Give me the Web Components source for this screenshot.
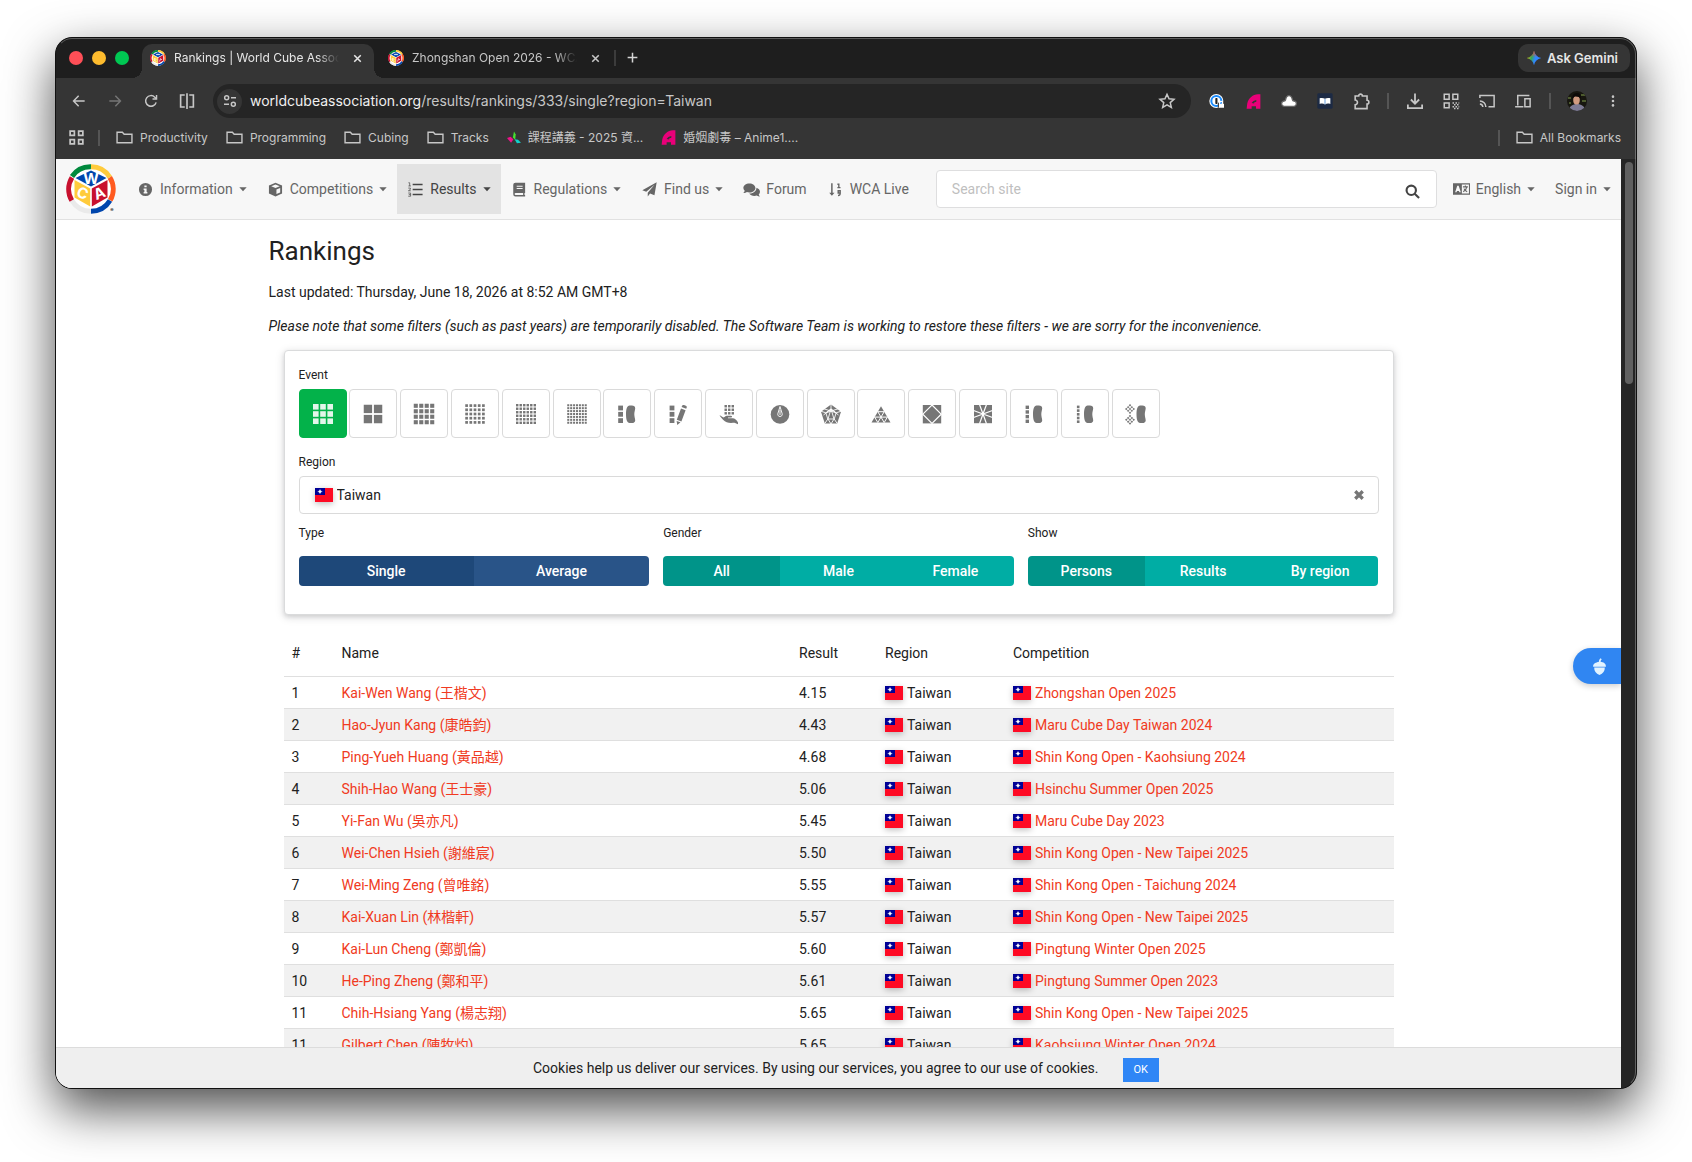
<!DOCTYPE html>
<html lang="en">
<head>
<meta charset="utf-8">
<title>Rankings | World Cube Association</title>
<style>
  * { box-sizing: border-box; }
  body {
    margin: 0;
    min-height: 100vh;
    background: #fff;
    font-family: Roboto, "Noto Sans CJK TC", sans-serif;
    font-size: 14px;
    line-height: 20px;
    color: #212121;
  }
</style>
</head>
<body>
  <browser-window>
    <tab-strip slot="chrome"></tab-strip>
    <tool-bar slot="chrome"></tool-bar>
    <bookmark-bar slot="chrome"></bookmark-bar>

    <site-nav></site-nav>
    <page-content>
      <h1 slot="title">Rankings</h1>
      <span slot="updated">Last updated: Thursday, June 18, 2026 at 8:52 AM GMT+8</span>
      <span slot="note">Please note that some filters (such as past years) are temporarily disabled. The Software Team is working to restore these filters - we are sorry for the inconvenience.</span>
      <rankings-filter></rankings-filter>
      <rankings-table></rankings-table>
    </page-content>
    <feedback-tab slot="overlay"></feedback-tab>
    <cookie-banner slot="overlay">Cookies help us deliver our services. By using our services, you agree to our use of cookies.</cookie-banner>
  </browser-window>

<script>
  // ---------- icons ----------

  // n x n squares centred in a 24 box
  function grid(n, size, gap, x = 12 - size / 2, y = 12 - size / 2) {
    const s = (size - gap * (n - 1)) / n;
    let out = '';
    for (let r = 0; r < n; r++) {
      for (let c = 0; c < n; c++) {
        out += `<rect x="${x + c * (s + gap)}" y="${y + r * (s + gap)}" width="${s}" height="${s}"/>`;
      }
    }
    return out;
  }

  function column(n, width, x) {
    const step = (17.4 - width) / (n - 1);
    let out = '';
    for (let i = 0; i < n; i++) {
      out += `<rect x="${x}" y="${3.6 + i * step}" width="${width}" height="${width}"/>`;
    }
    return out;
  }

  const bean = '<path d="M14.6 3.6h2.2c2.2 0 3.4 1.2 3.4 2.6 0 1.6-.9 3.6-.9 6.1s.9 4.5.9 6.1c0 1.4-1.2 2.6-3.4 2.6h-2.2c-2.6 0-3.6-3.7-3.6-8.7s1-8.7 3.6-8.7z"/>';
  const diamond = (y) => `<g transform="rotate(45 7 ${y})">${grid(3, 7, 0.9, 3.5, y - 3.5)}</g>`;

  const eventIcons = {
    'e-333': grid(3, 20, 1.6),
    'e-222': grid(2, 18.5, 1.8),
    'e-444': grid(4, 20.5, 1.4),
    'e-555': grid(5, 19.5, 1.5),
    'e-666': grid(6, 20, 1.1),
    'e-777': grid(7, 19.5, 0.9),
    'e-333bf': column(3, 4.8, 3.2) + bean,
    'e-333fm': column(3, 4.8, 3.6) + '<path d="M15 6.500l4.600 1.700-4.200 11.300-4.600-1.700zM10.600 18.900l3.900 1.400-3.200 2.600zM15.600 5.100l.6-1.500c.6-1.400 5.200.2 4.600 1.700l-.6 1.500z"/>',
    'e-333oh': grid(3, 9.5, 1.1, 7.5, 3) + '<path d="M2.500 13.500c1.500-.4 2.700 1.600 4 2 1.600-.5 1.700-1.500 3.300-1.700h4c1.600 0 1.700 1.600.2 1.700h-3v.7h4.800c1.900 0 4 1.600 5.200 4.300v1.700l-3.500-1.400c-1.600 0-5.200.5-7.800-.5-2.500-1-4.800-3.700-7.200-6.800z"/>',
    'e-clock': '<circle cx="12" cy="12.4" r="9.3"/><path d="M12 4.5l2.2 7.3c.3 1.6-.8 2.7-2.2 2.7s-2.500-1.100-2.200-2.700zM12 8v5" fill="none" stroke="#fff" stroke-width=".9"/>',
    'e-minx': '<path d="M12 2.5l10 7.3-3.8 11.7H5.8L2 9.8z"/><path d="M12 7l5.2 3.8-2 6.2H8.8l-2-6.2zM12 7V2M17.2 10.800l5-1.600M15.2 17l3 4.500M8.800 17l-3 4.500M6.800 10.800l-5-1.600M5 6.800l12.300 4.100M19 6.800L6.700 10.900M12 7l7.500 6M12 7l-7.500 6M9 17l3-10M15 17L12 7M12 22l3-5M12 22l-3-5" fill="none" stroke="#fff" stroke-width=".9"/>',
    'e-pyram': '<path d="M12 4.3L21.5 20.5h-19z"/><path d="M8.8 9.7h6.4M5.6 15.1h12.8M8.8 9.7l6.4 10.8M15.2 9.7L8.8 20.5M5.6 15.1l3.2 5.4M18.4 15.1l-3.2 5.4" fill="none" stroke="#fff" stroke-width="1"/>',
    'e-skewb': '<path d="M2.8 3h18.4v18.4H2.8z"/><path d="M12 3l9.2 9.2-9.2 9.2-9.2-9.2z" fill="none" stroke="#fff" stroke-width="1.2"/>',
    'e-sq1': '<path d="M3 3h18v18.2H3z"/><path d="M12 12L8.5 2.5M12 12l3.5-9.5M12 12L8.5 21.7M12 12l3.5 9.7M12 12L2.5 8.500M12 12l9.500-3.500M12 12l-9.500 3.500M12 12l9.500 3.500" stroke="#fff" stroke-width="1.2"/>',
    'e-444bf': column(4, 3.4, 3.6) + bean,
    'e-555bf': column(5, 2.6, 3.9) + bean,
    'e-333mbf': '<g transform="translate(1.5 0)">' + bean + '</g><g transform="translate(-1 0)">' + diamond(7) + diamond(17.8) + '</g>'
  };

  const line = (d, w = 1.6) => `<g fill="none" stroke="currentColor" stroke-width="${w}">${d}</g>`;

  const icons = {
    ...eventIcons,
    // browser
    close: line('<path d="M6 6l12 12M18 6L6 18"/>', 2.8),
    plus: line('<path d="M12 3v18M3 12h18"/>', 2.8),
    back: line('<path d="M20.5 12H4M11.5 4L3.8 12l7.7 8"/>', 2.2),
    forward: line('<path d="M3.5 12H20M12.5 4l7.7 8-7.7 8"/>', 2.2),
    reload: line('<path d="M19.7 14a8 8 0 1 1-2-7.7L20 8.5"/><path d="M20.3 3v6h-6"/>', 2.2),
    split: line('<path d="M9 4H3.5v16H9M15 4h5.5v16H15M12 1.5v21"/>', 2.2),
    tune: line('<path d="M13.5 7H21M3 17h7.5"/><circle cx="7" cy="7" r="3"/><circle cx="17" cy="17" r="3"/>', 2.2),
    star: line('<path d="M12 3l2.7 6.1 6.6.6-5 4.4 1.5 6.5L12 17.2l-5.8 3.4 1.5-6.5-5-4.4 6.6-.6z"/>', 2),
    onepass: '<circle cx="11" cy="12" r="10.5" fill="#fff"/><circle cx="11" cy="12" r="7.5" fill="none" stroke="#1a8cff" stroke-width="3"/><rect x="9.5" y="7.5" width="3.2" height="9" rx="1" fill="#222"/><path d="M14 16.5h8.5V22H14z" fill="#fff"/><path d="M16 17v-2a2.3 2.3 0 0 1 4.6 0v2" fill="none" stroke="#fff" stroke-width="1.8"/><path d="M14 22v-7.5" stroke="#222" stroke-width="1.5"/>',
    anime: '<path fill="#e90079" d="M1 23.5L2 15C4 7 11 .5 19 .5h4v23h-7v-4H9v4z"/><path fill="#353535" d="M9 14.5c1.5-2.5 4-4.5 7.5-5v3l-3.5 1v1.5z"/>',
    cloud: '<path fill="#fff" stroke="#666" stroke-width="2" d="M5.5 20h13a4 4 0 0 0 1-8c-1.3-.3-2-.8-2.4-2C16 4.8 14 4 12 4S8 4.8 6.9 10c-.4 1.2-1.1 1.7-2.4 2a4 4 0 0 0 1 8z"/>',
    book: '<rect x=".5" y=".5" width="23" height="23" rx="2" fill="#1c2a44"/><path fill="#fff" d="M4 8c3-1 5.5-.8 8 .8 2.5-1.6 5-1.8 8-.8v8.5c-3-1-5.5-.8-8 .6-2.5-1.4-5-1.6-8-.6z"/><path d="M12 9v8" stroke="#4c8dd8" stroke-width="1.3"/>',
    puzzle: line('<path d="M4 5h4.5a2.3 2.3 0 1 1 4.6 0H19v5.5a2.3 2.3 0 1 1 0 4.6V21H4v-5a2.9 2.9 0 0 0 0-5.8z"/>', 2),
    download: line('<path d="M12 2v13M6.5 10L12 15.5 17.5 10M2.5 16.5v5h19v-5"/>', 2.4),
    qr: line('<path d="M3 3h6.5v6.5H3zM14.5 3H21v6.5h-6.5zM3 14.5h6.5V21H3z"/><path stroke-dasharray="2 2" d="M14 14.5h9M16 17h7M14 19.5h9M16 22h6"/>', 2),
    cast: line('<path d="M2.5 8V4.5h19v15H14M2.5 12a8 8 0 0 1 8 8M2.5 16a4.5 4.5 0 0 1 4 4"/>', 2),
    devices: line('<path d="M5 18V4.5h15.5M1.5 19.5h11M14.5 9h7v10.5h-7z"/>', 2),
    dots: '<circle cx="12" cy="4.5" r="2.2"/><circle cx="12" cy="12" r="2.2"/><circle cx="12" cy="19.5" r="2.2"/>',
    apps: line('<path d="M3 3h6v6H3zM15 3h6v6h-6zM3 15h6v6H3zM15 15h6v6h-6z"/>', 2.4),
    folder: line('<path d="M1.5 19.5v-15h7.5l2.5 2.8h11v12.2z"/>', 2),
    pinwheel: '<path fill="#45e02f" d="M12 1l3 5-1 9-4-4z"/><path fill="#ee1289" d="M0 12l6-2 5 4-4 6z"/><path fill="#12cfc9" d="M13 14l6 1 5 5-7 1z"/>',
    // site navigation
    info: '<path fill-rule="evenodd" d="M12 1.500a10.500 10.500 0 1 0 0 21 10.500 10.500 0 0 0 0-21zm-1.800 4h3.6v3h-3.6zM9 10.200h4.8v5.6H15v2.4H9v-2.4h1.2v-3.2H9z"/>',
    cube: '<path fill-rule="evenodd" d="M12 1l10.5 4.5v13L12 23 1.5 18.5v-13zM12 4L5.2 6.7 12 9.6l6.8-2.9zM13.5 12v7.3l6-2.6V9.5z"/>',
    list: '<path d="M8 4h14v2H8zM8 11h14v2H8zM8 18h14v2H8z"/><path d="M2 2.5h1.8V7M2 7h3.5M1.8 10h3v1.8l-2.8 2h3.400M1.800 17h3.300v4.500H1.800M2.500 19.200H5" fill="none" stroke="currentColor" stroke-width="1"/>',
    manual: '<path fill-rule="evenodd" d="M5.5 1H21v16.5h-1v3.3h1V23H5.500A3.500 3.500 0 0 1 2 19.500v-15A3.500 3.500 0 0 1 5.500 1zm2 5v1.600h9.500V6zm0 3.500v1.600h9.500V9.500zM5.800 17.600a1.600 1.600 0 0 0 0 3.200h12v-3.200z"/>',
    plane: '<path d="M23.5.5l-3.6 20.8-7-3-3.7 5V17L20 4.5 6.8 15.6.5 13z"/>',
    chat: '<path d="M9 3.5c4.8 0 8.5 2.8 8.5 6.4S13.8 16.3 9 16.3c-1.3 0-2.5-.2-3.6-.6-1.2.8-2.8 1.4-5 1.4 1-1 1.8-2.2 2-3.2A6 6 0 0 1 .5 9.900C.5 6.300 4.200 3.500 9 3.500z"/><path d="M19 9.500c2.900.9 5 3 5 5.500 0 1.500-.7 2.800-1.800 3.900.2.900.9 2 1.800 2.900-2 0-3.500-.5-4.600-1.300-1 .4-2.100.5-3.300.5-3.200 0-6-1.400-7.300-3.400 5.700.3 10.300-3.200 10.200-8.100z"/>',
    sort: '<path d="M5 2h2.400v15h3L6.200 22 2 17h3z"/><path d="M15 3.500h2.300V9M15 9h5M19.500 17.500h-3.200v-3.500h3.200v4.500c0 2-1 3-3.500 3" fill="none" stroke="currentColor" stroke-width="2.2"/>',
    search: line('<circle cx="10" cy="10" r="7.5"/><path d="M15.5 15.5l7 7"/>', 3.4),
    language: '<path fill-rule="evenodd" d="M0 4h24v16H0zm3 12.500h2l.6-1.800h2.800l.6 1.800h2L8 7.500H6zM12.500 5.500v13h10v-13z"/><path d="M14 9h7M17.500 7v2M19.500 9c-.5 3-2.500 5.500-5 7M15.500 11.500c.8 2 2.500 3.500 4.500 4.500" fill="none" stroke="currentColor" stroke-width="1.6"/>',
    caret: '<path d="M1 7h22L12 18.5z"/>',
    clear: line('<path d="M4.5 4.5l15 15M19.5 4.5l-15 15"/>', 6.5),
    acorn: '<path d="M11 5.5c0-2 .8-3.7 2.6-5.2l1.5 1.4C14 2.8 13.5 4 13.5 5.3c4 .3 7.5 2.6 7.5 6v1H3v-1c0-3.2 4-5.6 8-5.8zM4.5 13.5h15c.2 5-2.5 8.500-7.500 10.500-5-2-7.700-5.500-7.500-10.500z"/>'
  };

  class UiIcon extends HTMLElement {
    constructor() {
      super();
      this.attachShadow({ mode: 'open' });
    }

    connectedCallback() {
      const name = this.getAttribute('name');
      const size = this.getAttribute('size') || 16;
      this.shadowRoot.innerHTML = `
        <style>
          :host { display: inline-flex; flex: none; align-items: center; justify-content: center; }
          svg { display: block; fill: currentColor; }
        </style>
        <svg width="${size}" height="${size}" viewBox="0 0 24 24" aria-hidden="true">${icons[name] || ''}</svg>
      `;
    }
  }
  customElements.define('ui-icon', UiIcon);

  class FlagIcon extends HTMLElement {
    constructor() {
      super();
      this.attachShadow({ mode: 'open' });
      this.shadowRoot.innerHTML = `
        <style>
          :host { display: inline-block; flex: none; width: 18px; height: 14px; box-shadow: 0 2px 6px rgba(0, 0, 0, .25); }
          svg { display: block; }
        </style>
        <svg width="18" height="14" viewBox="0 0 18 14" aria-hidden="true">
          <path fill="#fe0a24" d="M0 0h18v14H0z"/>
          <path fill="#000095" d="M0 0h10v7H0z"/>
          <circle cx="5" cy="3.6" r="1.4" fill="#fff"/>
          <path d="M5 1.3v4.6M2.7 3.6h4.6" stroke="#fff" stroke-width=".6"/>
        </svg>
      `;
    }
  }
  customElements.define('flag-icon', FlagIcon);

  class WcaLogo extends HTMLElement {
    constructor() {
      super();
      this.attachShadow({ mode: 'open' });
    }

    connectedCallback() {
      const size = this.getAttribute('size') || 50;
      const small = this.hasAttribute('small');
      // ring: six segments round the cube
      this.shadowRoot.innerHTML = `
        <style>
          :host { display: inline-flex; flex: none; }
          svg { display: block; overflow: visible; }
          text { font: 700 15px Inter, sans-serif; fill: #fff; text-anchor: middle; }
          .mark { font-size: 5px; fill: #222; }
        </style>
        <svg width="${size}" height="${size}" viewBox="0 0 50 50" role="img" aria-label="World Cube Association">
          <circle cx="25" cy="25" r="24" fill="#fff"/>
          <g fill="none" stroke-width="5">
            <path stroke="#00893d" d="M6 12.5A22.2 22.2 0 0 1 25 2.8"/>
            <path stroke="#ffcb3c" d="M25 2.8a22.2 22.2 0 0 1 18.8 10.5"/>
            <path stroke="#ff5a1f" d="M43.8 13.3a22.2 22.2 0 0 1 .4 23"/>
            <path stroke="#0046ad" d="M44 36.5a22.2 22.2 0 0 1-19 10.7"/>
            <path stroke="#eaeaea" d="M25 47.2A22.2 22.2 0 0 1 5.8 36.5"/>
            <path stroke="#c8102e" d="M5.8 36.5a22.2 22.2 0 0 1 .2-23"/>
          </g>
          <path fill="#0046ad" d="M25 6.5L40.5 14 25 22.5 9.5 14z"/>
          <path fill="#ffcb3c" d="M8.5 16L24.2 24.5V42.5L8.5 33.5z"/>
          <path fill="#c8102e" d="M41.5 16L25.8 24.5V42.5l15.7-9z"/>
          ${small ? '<path d="M19 12l3 4 3-4 3 4 3-4M20 29l-7-2v5l7 4M30 36l3-9 4 4" fill="none" stroke="#fff" stroke-width="2.5"/>' : `
          <text x="25" y="19.5">W</text>
          <text x="16.5" y="34.5" transform="rotate(22 16.5 29.5)">C</text>
          <text x="33.5" y="34.5" transform="rotate(-22 33.5 29.5)">A</text>
          <text class="mark" x="46" y="48">®</text>`}
        </svg>
      `;
    }
  }
  customElements.define('wca-logo', WcaLogo);

  // ---------- browser window ----------

  class BrowserWindow extends HTMLElement {
    constructor() {
      super();
      this.attachShadow({ mode: 'open' });
      this.shadowRoot.innerHTML = `
        <style>
          * { box-sizing: border-box; }
          :host { display: block; padding: 37px 55px 73px; }
          .frame {
            display: flex;
            flex-direction: column;
            height: calc(100vh - 110px);
            min-height: 500px;
            border: 1px solid #111;
            border-radius: 17px;
            overflow: hidden;
            background: #1e1e1e;
            box-shadow: 0 20px 50px rgba(0, 0, 0, .7);
            position: relative;
          }
          /* light rim just inside the frame */
          .frame::after {
            content: "";
            position: absolute;
            inset: 0;
            border: 1px solid rgba(255, 255, 255, .28);
            border-left-color: transparent;
            border-bottom-color: transparent;
            border-radius: 16px;
            pointer-events: none;
          }
          .view { flex: 1; min-height: 0; display: flex; background: #252525; }
          .page {
            flex: 1;
            min-width: 0;
            position: relative;
            overflow: hidden;
            background: #fff;
          }
          .scrollbar { width: 15px; padding: 3px 3px 3px 4px; }
          .thumb { height: 24%; border-radius: 4px; background: #606060; }
        </style>
        <div class="frame">
          <slot name="chrome"></slot>
          <div class="view">
            <div class="page">
              <slot></slot>
              <slot name="overlay"></slot>
            </div>
            <div class="scrollbar"><div class="thumb"></div></div>
          </div>
        </div>
      `;
    }
  }
  customElements.define('browser-window', BrowserWindow);

  class BrowserTab extends HTMLElement {
    constructor() {
      super();
      this.attachShadow({ mode: 'open' });
      this.shadowRoot.innerHTML = `
        <style>
          :host {
            display: flex;
            box-sizing: border-box;
            align-items: center;
            width: 232px;
            height: 34px;
            padding: 0 6px 6px 8px;
            gap: 8px;
            border-radius: 10px 10px 0 0;
            color: #c7c7c7;
            position: relative;
          }
          :host([active]) { background: #353535; color: #e6e6e6; }
          :host([active])::before, :host([active])::after {
            content: "";
            position: absolute;
            bottom: 0;
            width: 10px;
            height: 10px;
            background: radial-gradient(circle at 0 0, transparent 10px, #353535 10px);
          }
          :host([active])::before { left: -10px; }
          :host([active])::after { right: -10px; transform: scaleX(-1); }
          .title {
            flex: 1;
            min-width: 0;
            overflow: hidden;
            white-space: nowrap;
            mask-image: linear-gradient(to left, transparent, #000 22px);
          }
          button { border: 0; background: none; padding: 4px; color: inherit; display: flex; }
        </style>
        <wca-logo size="16" small></wca-logo>
        <span class="title"><slot></slot></span>
        <button aria-label="Close tab"><ui-icon name="close" size="13"></ui-icon></button>
      `;
    }
  }
  customElements.define('browser-tab', BrowserTab);

  class TabStrip extends HTMLElement {
    constructor() {
      super();
      this.attachShadow({ mode: 'open' });
      this.shadowRoot.innerHTML = `
        <style>
          :host {
            display: flex;
            flex: none;
            align-items: flex-end;
            height: 40px;
            padding: 0 6px 0 13px;
            background: #1e1e1e;
            font: 400 12px/20px Inter, "Noto Sans CJK TC", sans-serif;
          }
          .lights { display: flex; gap: 9px; padding-bottom: 13px; margin-right: 13px; }
          .lights span { width: 14px; height: 14px; border-radius: 50%; background: #ff4f57; }
          .lights span:nth-child(2) { background: #febc2e; }
          .lights span:nth-child(3) { background: #00c853; }
          browser-tab + browser-tab { margin-left: 6px; }
          .sep { width: 2px; height: 16px; margin: 0 6px 12px 2px; background: #3c3c3c; }
          button { border: 0; background: none; color: #d5d5d5; font: inherit; display: flex; align-items: center; }
          .new { padding: 4px; margin-bottom: 10px; }
          .gemini {
            margin-left: auto;
            margin-bottom: 6px;
            height: 28px;
            padding: 0 12px 0 8px;
            gap: 5px;
            border-radius: 10px;
            background: #353535;
            color: #e6e6e6;
            font-size: 13px;
            font-weight: 600;
          }
        </style>
        <div class="lights"><span></span><span></span><span></span></div>
        <browser-tab active>Rankings | World Cube Association</browser-tab>
        <browser-tab>Zhongshan Open 2026 - WCA Live</browser-tab>
        <span class="sep"></span>
        <button class="new" aria-label="New tab"><ui-icon name="plus" size="13"></ui-icon></button>
        <button class="gemini">
          <svg width="16" height="16" viewBox="0 0 24 24" aria-hidden="true">
            <defs>
              <linearGradient id="g" x1="0" y1=".3" x2="1" y2=".6">
                <stop offset="0" stop-color="#fbbc04"/><stop offset=".35" stop-color="#34a853"/>
                <stop offset=".6" stop-color="#3186ff"/><stop offset="1" stop-color="#3186ff"/>
              </linearGradient>
              <linearGradient id="r" x1="0" y1="0" x2="0" y2="1">
                <stop offset="0" stop-color="#f43f4d"/><stop offset=".45" stop-color="#f43f4d" stop-opacity="0"/>
              </linearGradient>
            </defs>
            <path fill="url(#g)" d="M12 1c1.2 6 5 9.8 11 11-6 1.2-9.8 5-11 11-1.2-6-5-9.8-11-11 6-1.2 9.8-5 11-11z"/>
            <path fill="url(#r)" d="M12 1c1.2 6 5 9.8 11 11-6 1.2-9.8 5-11 11-1.2-6-5-9.8-11-11 6-1.2 9.8-5 11-11z"/>
          </svg>
          Ask Gemini
        </button>
      `;
    }
  }
  customElements.define('tab-strip', TabStrip);

  class ToolBar extends HTMLElement {
    constructor() {
      super();
      this.attachShadow({ mode: 'open' });
      this.shadowRoot.innerHTML = `
        <style>
          :host {
            display: flex;
            flex: none;
            align-items: center;
            height: 46px;
            padding: 0 5px;
            background: #353535;
            color: #c7c7c7;
          }
          button { border: 0; background: none; color: inherit; padding: 0; width: 36px; height: 28px; display: flex; align-items: center; justify-content: center; }
          button:disabled { color: #757575; }
          .omnibox {
            flex: 1;
            display: flex;
            align-items: center;
            height: 34px;
            margin: 0 8px;
            padding: 0 6px 0 4px;
            gap: 8px;
            border-radius: 17px;
            background: #252525;
            font: 400 14px/20px Inter, sans-serif;
          }
          .omnibox .info { width: 25px; height: 25px; border-radius: 50%; background: #353535; }
          .url { flex: 1; white-space: nowrap; }
          .url b { font-weight: 400; color: #f0f0f0; }
          .sep { width: 2px; height: 16px; background: #555; margin: 0 8px; }
          .avatar svg { border-radius: 50%; }
        </style>
        <button aria-label="Back"><ui-icon name="back"></ui-icon></button>
        <button aria-label="Forward" disabled><ui-icon name="forward"></ui-icon></button>
        <button aria-label="Reload"><ui-icon name="reload"></ui-icon></button>
        <button aria-label="Split view"><ui-icon name="split" size="18"></ui-icon></button>
        <div class="omnibox">
          <button class="info" aria-label="Site information"><ui-icon name="tune"></ui-icon></button>
          <span class="url"><b>worldcubeassociation.org</b>/results/rankings/333/single?region=Taiwan</span>
          <button aria-label="Bookmark this tab"><ui-icon name="star" size="18"></ui-icon></button>
        </div>
        <button aria-label="Passwords"><ui-icon name="onepass"></ui-icon></button>
        <button aria-label="Anime1"><ui-icon name="anime" size="15"></ui-icon></button>
        <button aria-label="Cloud"><ui-icon name="cloud"></ui-icon></button>
        <button aria-label="Reader"><ui-icon name="book"></ui-icon></button>
        <button aria-label="Extensions"><ui-icon name="puzzle" size="19"></ui-icon></button>
        <span class="sep"></span>
        <button aria-label="Downloads"><ui-icon name="download" size="18"></ui-icon></button>
        <button aria-label="QR code"><ui-icon name="qr" size="18"></ui-icon></button>
        <button aria-label="Cast"><ui-icon name="cast" size="18"></ui-icon></button>
        <button aria-label="Devices"><ui-icon name="devices" size="18"></ui-icon></button>
        <span class="sep"></span>
        <button class="avatar" aria-label="Profile">
          <svg width="20" height="20" viewBox="0 0 20 20" aria-hidden="true">
            <path fill="#17160f" d="M0 0h20v20H0z"/>
            <path fill="#4c5a2e" d="M1 6h3v2H1zM14 3h4v2h-4zM15 9h4v2h-4zM2 11h2v2H2z"/>
            <path fill="#7d7a95" d="M2 20c0-5 4-7 8-7s8 2 8 7z"/>
            <ellipse cx="9.5" cy="9" rx="3.3" ry="4.5" fill="#d09a80"/>
            <path fill="#0d0a08" d="M5.5 8c-.5-4 1.5-6 4.5-6s4.5 2.5 3.5 6c-.6-1.7-2.500-2.500-5-2.500C7 5.500 6 7 5.500 8z"/>
          </svg>
        </button>
        <button aria-label="Menu"><ui-icon name="dots" size="14"></ui-icon></button>
      `;
    }
  }
  customElements.define('tool-bar', ToolBar);

  class BookmarkBar extends HTMLElement {
    constructor() {
      super();
      this.attachShadow({ mode: 'open' });
      this.shadowRoot.innerHTML = `
        <style>
          :host {
            display: flex;
            flex: none;
            align-items: center;
            height: 35px;
            padding: 0 15px 8px 12px;
            background: #353535;
            color: #c7c7c7;
            font: 400 12px/20px Inter, "Noto Sans CJK TC", sans-serif;
            white-space: nowrap;
          }
          a { display: flex; align-items: center; gap: 7px; color: inherit; text-decoration: none; margin-right: 18px; }
          .sep { width: 2px; height: 16px; background: #555; margin: 0 16px 0 13px; }
          .end { display: flex; align-items: center; margin-left: auto; }
          .end a { margin-right: 0; }
        </style>
        <ui-icon name="apps" size="17"></ui-icon>
        <span class="sep"></span>
        <a href="#"><ui-icon name="folder" size="17"></ui-icon>Productivity</a>
        <a href="#"><ui-icon name="folder" size="17"></ui-icon>Programming</a>
        <a href="#"><ui-icon name="folder" size="17"></ui-icon>Cubing</a>
        <a href="#"><ui-icon name="folder" size="17"></ui-icon>Tracks</a>
        <a href="#"><ui-icon name="pinwheel" size="14"></ui-icon>課程講義 - 2025 資...</a>
        <a href="#"><ui-icon name="anime" size="15"></ui-icon>婚姻劇毒 – Anime1....</a>
        <div class="end">
          <span class="sep"></span>
          <a href="#"><ui-icon name="folder" size="17"></ui-icon>All Bookmarks</a>
        </div>
      `;
    }
  }
  customElements.define('bookmark-bar', BookmarkBar);

  // ---------- site ----------

  class NavItem extends HTMLElement {
    constructor() {
      super();
      this.attachShadow({ mode: 'open' });
    }

    connectedCallback() {
      const icon = this.getAttribute('icon');
      this.shadowRoot.innerHTML = `
        <style>
          :host { display: flex; height: 50px; color: #666; }
          :host([active]) { background: #e3e3e3; color: #444; }
          a { display: flex; align-items: center; padding: 0 10px; color: inherit; text-decoration: none; white-space: nowrap; }
          .icon { width: 17px; margin-right: 6px; }
          .caret { margin-left: 6px; }
        </style>
        <a href="#">
          ${icon ? `<ui-icon class="icon" name="${icon}" size="${this.getAttribute('size') || 15}"></ui-icon>` : ''}
          <slot></slot>
          ${this.hasAttribute('menu') ? '<ui-icon class="caret" name="caret" size="8"></ui-icon>' : ''}
        </a>
      `;
    }
  }
  customElements.define('nav-item', NavItem);

  class SiteNav extends HTMLElement {
    constructor() {
      super();
      this.attachShadow({ mode: 'open' });
      this.shadowRoot.innerHTML = `
        <style>
          :host {
            display: flex;
            align-items: center;
            height: 61px;
            padding: 0 0 0 10px;
            border-bottom: 1px solid #e1e1e1;
            background: #f7f7f7;
          }
          wca-logo { margin-right: 11px; }
          form {
            flex: 1;
            display: flex;
            align-items: center;
            height: 38px;
            margin: 0 6px 0 17px;
            padding-right: 16px;
            border: 1px solid #dededf;
            border-radius: 4px;
            background: #fff;
            color: #444;
            box-sizing: border-box;
          }
          input { flex: 1; min-width: 0; border: 0; outline: 0; background: none; padding: 0 15px; font: inherit; color: #212121; }
          input::placeholder { color: #bfbfbf; }
          button { border: 0; background: none; padding: 4px 0 0; color: inherit; display: flex; }
        </style>
        <wca-logo></wca-logo>
        <nav-item icon="info" menu>Information</nav-item>
        <nav-item icon="cube" menu>Competitions</nav-item>
        <nav-item icon="list" size="17" menu active>Results</nav-item>
        <nav-item icon="manual" menu>Regulations</nav-item>
        <nav-item icon="plane" menu>Find us</nav-item>
        <nav-item icon="chat" size="17">Forum</nav-item>
        <nav-item icon="sort">WCA Live</nav-item>
        <form>
          <input type="text" placeholder="Search site" aria-label="Search site">
          <button type="button" aria-label="Search"><ui-icon name="search" size="15"></ui-icon></button>
        </form>
        <nav-item icon="language" size="18" menu>English</nav-item>
        <nav-item menu>Sign in</nav-item>
      `;
    }
  }
  customElements.define('site-nav', SiteNav);

  class PageContent extends HTMLElement {
    constructor() {
      super();
      this.attachShadow({ mode: 'open' });
      this.shadowRoot.innerHTML = `
        <style>
          :host { display: block; max-width: 1140px; margin: 0 auto; padding-top: 14px; }
          ::slotted(h1) { margin: 0; font-size: 26px; line-height: 34px; font-weight: 400; }
          p { margin: 14px 0; white-space: nowrap; }
          .body { padding: 0 15px; }
        </style>
        <slot name="title"></slot>
        <p><slot name="updated"></slot></p>
        <p><em><slot name="note"></slot></em></p>
        <div class="body"><slot></slot></div>
      `;
    }
  }
  customElements.define('page-content', PageContent);

  class EventPicker extends HTMLElement {
    constructor() {
      super();
      this.attachShadow({ mode: 'open' });
      this.shadowRoot.innerHTML = `
        <style>
          :host { display: flex; justify-content: space-between; max-width: 861px; }
          button {
            display: flex;
            align-items: center;
            justify-content: center;
            width: 48px;
            height: 49px;
            padding: 0;
            border: 1px solid #dadada;
            border-radius: 4px;
            background: #fff;
            color: #767676;
          }
          button.active { background: #03b24a; border-color: #03b24a; color: #e3f6ea; }
        </style>
        ${Object.keys(eventIcons).map((id) => `
          <button type="button" aria-label="${id.slice(2)}" class="${id === 'e-333' ? 'active' : ''}"><ui-icon name="${id}" size="24"></ui-icon></button>
        `).join('')}
      `;
    }
  }
  customElements.define('event-picker', EventPicker);

  class ButtonGroup extends HTMLElement {
    constructor() {
      super();
      this.attachShadow({ mode: 'open' });
    }

    connectedCallback() {
      const options = this.getAttribute('options').split(',');
      const label = this.getAttribute('label');
      this.shadowRoot.innerHTML = `
        <style>
          :host { display: block; --on: #009489; --off: #00ada4; }
          :host([blue]) { --on: #1e4879; --off: #295488; }
          .label { font-size: 12px; line-height: 18px; margin-bottom: 14px; }
          .group { display: flex; height: 30px; border-radius: 4px; overflow: hidden; }
          button { flex: 1 1 0; border: 0; padding: 0; background: var(--off); color: #fff; font: 500 14px/20px Roboto, sans-serif; }
          button:first-child { background: var(--on); }
        </style>
        <div class="label" id="label">${label}</div>
        <div class="group" role="group" aria-labelledby="label">
          ${options.map((o) => `<button type="button">${o}</button>`).join('')}
        </div>
      `;
    }
  }
  customElements.define('button-group', ButtonGroup);

  class RankingsFilter extends HTMLElement {
    constructor() {
      super();
      this.attachShadow({ mode: 'open' });
      this.shadowRoot.innerHTML = `
        <style>
          :host {
            display: block;
            padding: 15px 14px 28px;
            border: 1px solid #dadbdc;
            border-radius: 4px;
            background: #fff;
            box-shadow: 0 2px 4px rgba(34, 36, 38, .12), 0 2px 10px rgba(34, 36, 38, .15);
          }
          label, .label { display: block; font-size: 12px; line-height: 18px; }
          .label { margin-bottom: 5px; }
          label { margin: 15px 0 5px; }
          .select {
            display: flex;
            align-items: center;
            height: 38px;
            box-sizing: border-box;
            padding: 0 13px 0 15px;
            border: 1px solid #dadada;
            border-radius: 4px;
          }
          select { flex: 1; appearance: none; border: 0; outline: 0; background: none; padding: 0 0 0 4px; font: inherit; color: inherit; }
          .select button { border: 0; background: none; padding: 0; color: #767676; display: flex; }
          .groups { display: grid; grid-template-columns: repeat(3, 1fr); gap: 14px; margin-top: 10px; }
        </style>
        <div class="label">Event</div>
        <event-picker></event-picker>
        <label for="region">Region</label>
        <div class="select">
          <flag-icon></flag-icon>
          <select id="region"><option>Taiwan</option></select>
          <button type="button" aria-label="Clear region"><ui-icon name="clear" size="12"></ui-icon></button>
        </div>
        <div class="groups">
          <button-group blue label="Type" options="Single,Average"></button-group>
          <button-group label="Gender" options="All,Male,Female"></button-group>
          <button-group label="Show" options="Persons,Results,By region"></button-group>
        </div>
      `;
    }
  }
  customElements.define('rankings-filter', RankingsFilter);

  const rankings = [
    [1, 'Kai-Wen Wang (王楷文)', '4.15', 'Zhongshan Open 2025'],
    [2, 'Hao-Jyun Kang (康皓鈞)', '4.43', 'Maru Cube Day Taiwan 2024'],
    [3, 'Ping-Yueh Huang (黃品越)', '4.68', 'Shin Kong Open - Kaohsiung 2024'],
    [4, 'Shih-Hao Wang (王士豪)', '5.06', 'Hsinchu Summer Open 2025'],
    [5, 'Yi-Fan Wu (吳亦凡)', '5.45', 'Maru Cube Day 2023'],
    [6, 'Wei-Chen Hsieh (謝維宸)', '5.50', 'Shin Kong Open - New Taipei 2025'],
    [7, 'Wei-Ming Zeng (曾唯銘)', '5.55', 'Shin Kong Open - Taichung 2024'],
    [8, 'Kai-Xuan Lin (林楷軒)', '5.57', 'Shin Kong Open - New Taipei 2025'],
    [9, 'Kai-Lun Cheng (鄭凱倫)', '5.60', 'Pingtung Winter Open 2025'],
    [10, 'He-Ping Zheng (鄭和平)', '5.61', 'Pingtung Summer Open 2023'],
    [11, 'Chih-Hsiang Yang (楊志翔)', '5.65', 'Shin Kong Open - New Taipei 2025'],
    [11, 'Gilbert Chen (陳牧灼)', '5.65', 'Kaohsiung Winter Open 2024']
  ];

  class RankingsTable extends HTMLElement {
    constructor() {
      super();
      this.attachShadow({ mode: 'open' });
      this.shadowRoot.innerHTML = `
        <style>
          * { box-sizing: border-box; }
          :host { display: block; margin-top: 14px; }
          table { width: 100%; table-layout: fixed; border-collapse: separate; border-spacing: 0; }
          th, td { padding: 0 8px; text-align: left; white-space: nowrap; font-weight: 400; }
          th { height: 47px; }
          td { height: 32px; border-top: 1px solid #dfdfdf; }
          tbody tr:nth-child(even) { background: #f1f1f1; }
          .rank { width: 50px; }
          .result { width: 86px; }
          .region { width: 128px; }
          .competition { width: 35%; }
          .flagged { display: flex; align-items: center; gap: 4px; }
          a { color: #f03a22; text-decoration: none; }
        </style>
        <table>
          <thead>
            <tr>
              <th class="rank">#</th>
              <th>Name</th>
              <th class="result">Result</th>
              <th class="region">Region</th>
              <th class="competition">Competition</th>
            </tr>
          </thead>
          <tbody>
            ${rankings.map(([rank, name, result, competition]) => `
              <tr>
                <td>${rank}</td>
                <td><a href="#">${name}</a></td>
                <td>${result}</td>
                <td><span class="flagged"><flag-icon></flag-icon>Taiwan</span></td>
                <td><span class="flagged"><flag-icon></flag-icon><a href="#">${competition}</a></span></td>
              </tr>
            `).join('')}
          </tbody>
        </table>
      `;
    }
  }
  customElements.define('rankings-table', RankingsTable);

  class FeedbackTab extends HTMLElement {
    constructor() {
      super();
      this.attachShadow({ mode: 'open' });
      this.shadowRoot.innerHTML = `
        <style>
          /* floats over the right edge of the page */
          :host { position: absolute; right: 0; bottom: 404px; }
          button {
            display: flex;
            align-items: center;
            justify-content: center;
            width: 48px;
            height: 36px;
            padding: 0 0 0 4px;
            border: 0;
            border-radius: 18px 0 0 18px;
            background: #3086f2;
            color: #e2f3ff;
            box-shadow: 0 2px 6px rgba(0, 0, 0, .2);
          }
        </style>
        <button aria-label="Open panel"><ui-icon name="acorn" size="17"></ui-icon></button>
      `;
    }
  }
  customElements.define('feedback-tab', FeedbackTab);

  class CookieBanner extends HTMLElement {
    constructor() {
      super();
      this.attachShadow({ mode: 'open' });
      this.shadowRoot.innerHTML = `
        <style>
          /* pinned over the bottom of the page */
          :host {
            position: absolute;
            left: 0;
            right: 0;
            bottom: 0;
            display: flex;
            align-items: center;
            justify-content: center;
            gap: 24px;
            height: 41px;
            box-sizing: border-box;
            padding-left: 15px;
            border-top: 1px solid #dcdcdc;
            background: #efefef;
          }
          button { height: 24px; margin-top: 4px; padding: 0 11px; border: 0; background: #2f86f6; color: #fff; font: 400 11px/16px Roboto, sans-serif; }
        </style>
        <span><slot></slot></span>
        <button>OK</button>
      `;
    }
  }
  customElements.define('cookie-banner', CookieBanner);
</script>
</body>
</html>
